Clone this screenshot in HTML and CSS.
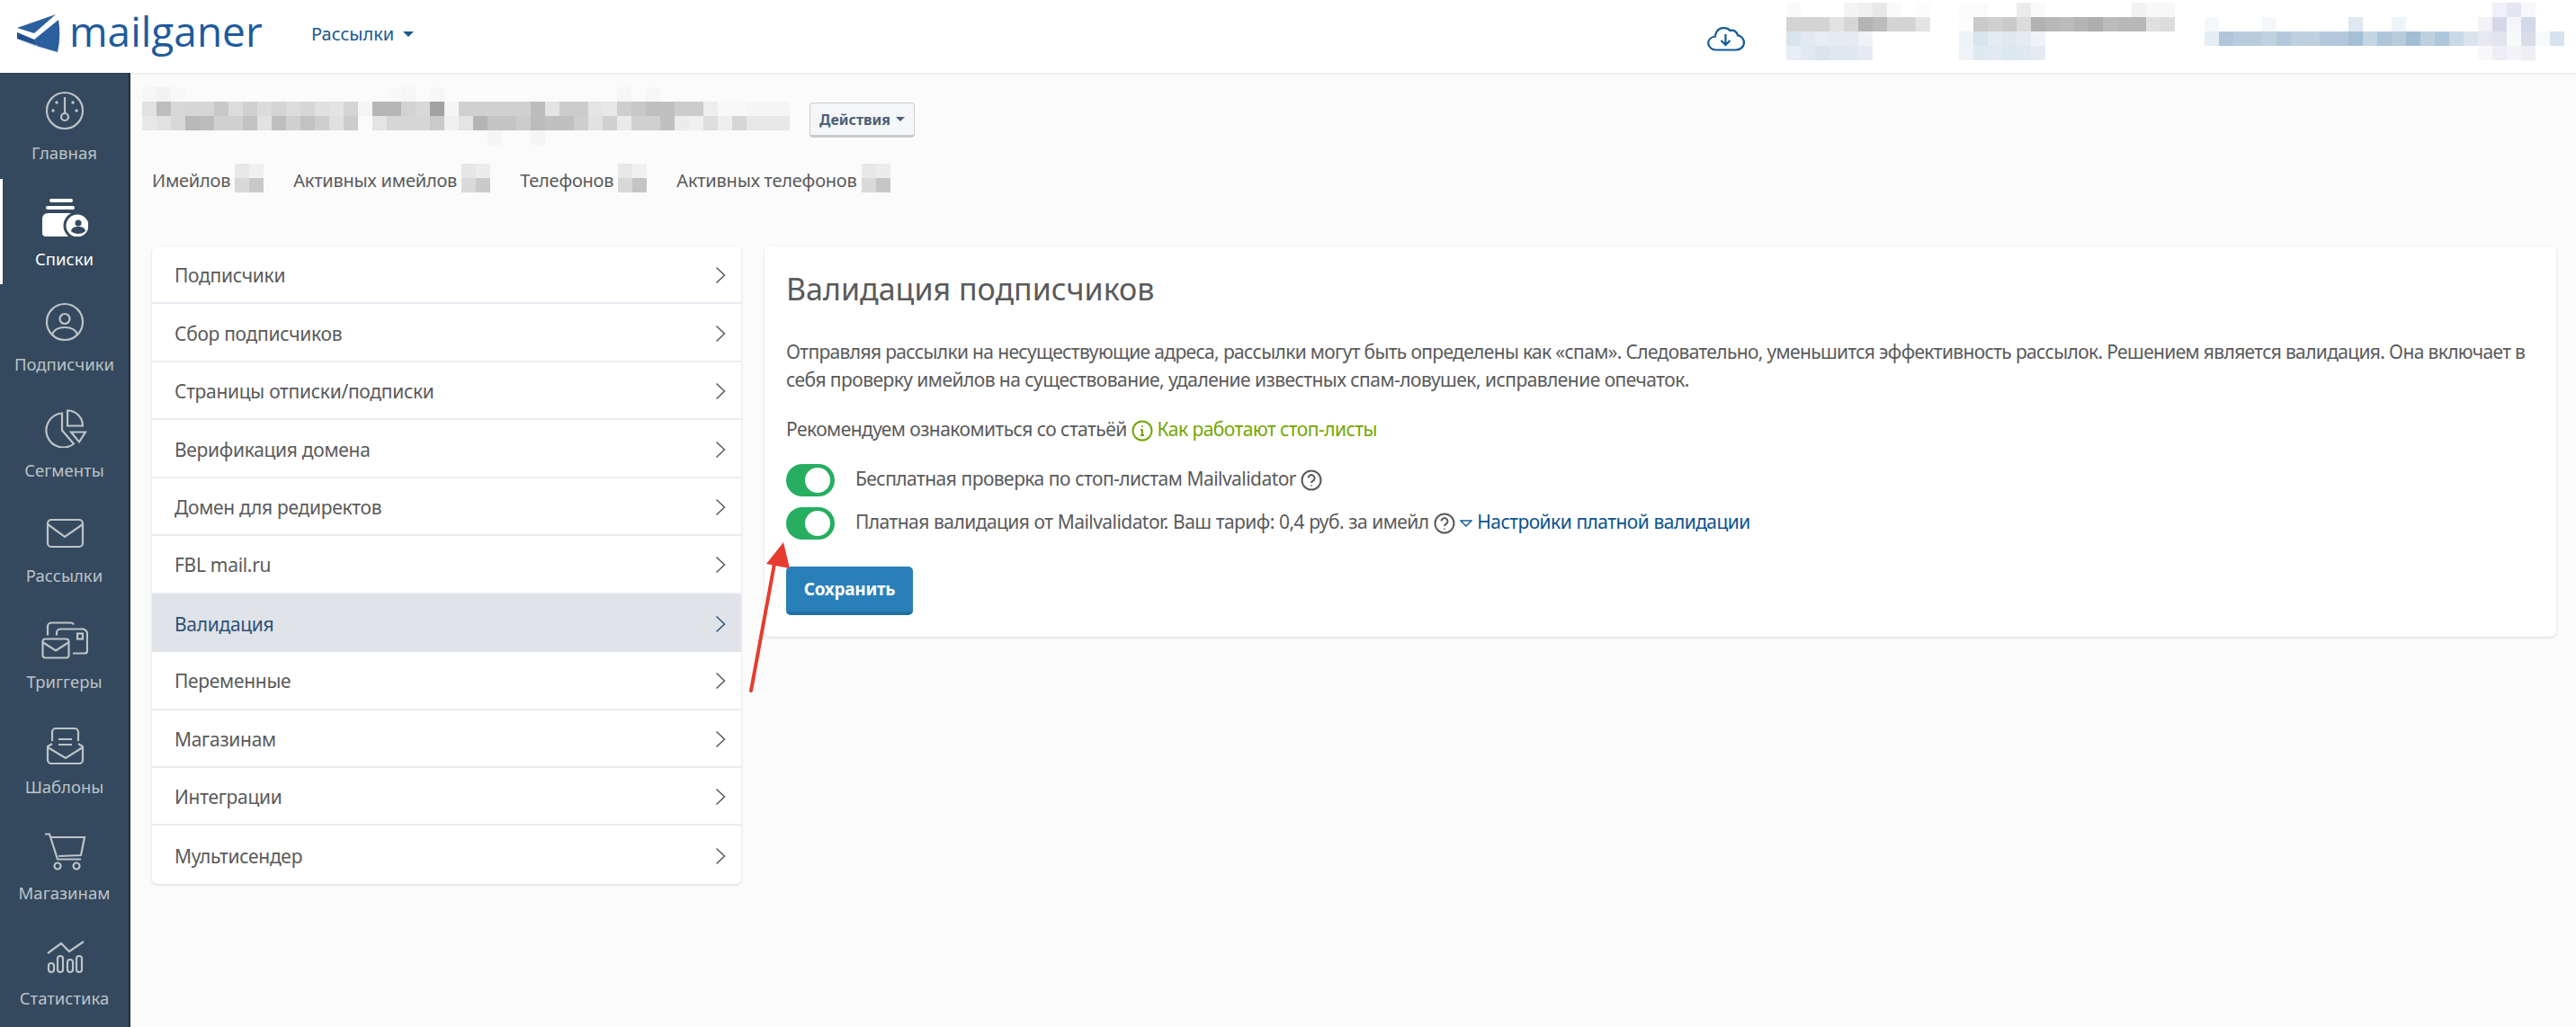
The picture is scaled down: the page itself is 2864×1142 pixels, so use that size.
FILE: index.html
```html
<!DOCTYPE html>
<html lang="ru">
<head>
<meta charset="utf-8">
<title>Mailganer</title>
<link rel="stylesheet" href="styles.css">
</head>
<body>
<header class="topbar">
  <a class="logo">
    <svg class="logo-mark" viewBox="19 16 48 43"><path fill="#2b5f9e" d="M19 31 62 16 38 37z"/><path fill="#2b5f9e" d="M38 44 65 22q3 18-1 36L42 51z"/><path fill="#1c4a85" d="M19 36 38 44 42 51 64 58 19 43z"/><path fill="#2b5f9e" d="M19 36 38 44 40 48 64 58 38 51 19 43z" opacity=".4"/></svg>
    <span class="logo-text">mailganer</span>
  </a>
  <a class="top-nav">Рассылки<i class="caret"></i></a>
  <svg class="cloud" viewBox="0 0 42 28"><path d="M10 26.500h22c5 0 9-3.500 9-8 0-4-3-7.500-7-8.300C33 6 29 3.500 25.500 5 22.500 1.500 14 .5 10.500 6.500 9.500 8.500 9 10 9 11.500 4.500 12 1.200 15 1.200 19c0 4 4 7.500 8.800 7.500z"/><path d="M20.500 9v12M15.500 16l5 5 5-5"/></svg>
  <svg class="mosaic m-top1" width="160" height="64" viewBox="0 0 160 64">
    <rect x="0" fill="#fafafa"/><rect x="64" fill="#f4f4f4"/><rect x="80" fill="#f0f0f0"/><rect x="96" fill="#e8e8e8"/><rect x="112" fill="#fafafa"/><rect x="144" fill="#fcfcfc"/>
    <rect x="0" y="16" fill="#d4d4d4"/><rect x="16" y="16" fill="#d4d4d4"/><rect x="32" y="16" fill="#d4d4d4"/><rect x="48" y="16" fill="#e2e2e2"/><rect x="64" y="16" fill="#d6d6d6"/><rect x="80" y="16" fill="#b4b4b4"/><rect x="96" y="16" fill="#bcbcbc"/><rect x="112" y="16" fill="#d4d4d4"/><rect x="128" y="16" fill="#d4d4d4"/><rect x="144" y="16" fill="#e4e4e4"/>
    <rect x="0" y="32" fill="#d8e4ed"/><rect x="16" y="32" fill="#e2e9f1"/><rect x="32" y="32" fill="#e6edf3"/><rect x="48" y="32" fill="#e4ebf2"/><rect x="64" y="32" fill="#e4ebf2"/><rect x="80" y="32" fill="#f0f4f8"/>
    <rect x="0" y="48" fill="#e8eef6"/><rect x="16" y="48" fill="#e0e9f1"/><rect x="32" y="48" fill="#d9e5ec"/><rect x="48" y="48" fill="#dfe8f0"/><rect x="64" y="48" fill="#e0e8f0"/><rect x="80" y="48" fill="#e4ebf2"/>
  </svg>
  <svg class="mosaic m-top2" width="240" height="64" viewBox="0 0 240 64">
    <rect x="0" fill="#fbfbfb"/><rect x="16" fill="#fbfbfb"/><rect x="64" fill="#ebebeb"/><rect x="80" fill="#fafafa"/><rect x="192" fill="#f2f2f2"/><rect x="208" fill="#f8f8f8"/><rect x="224" fill="#f8f8f8"/>
    <rect x="0" y="16" fill="#fcfcfc"/><rect x="16" y="16" fill="#cacaca"/><rect x="32" y="16" fill="#d0d0d0"/><rect x="48" y="16" fill="#cacaca"/><rect x="64" y="16" fill="#dcdcdc"/><rect x="80" y="16" fill="#b2b2b2"/><rect x="96" y="16" fill="#b8b8b8"/><rect x="112" y="16" fill="#bcbcbc"/><rect x="128" y="16" fill="#b4b4b4"/><rect x="144" y="16" fill="#aeaeae"/><rect x="160" y="16" fill="#bcbcbc"/><rect x="176" y="16" fill="#b8b8b8"/><rect x="192" y="16" fill="#b8b8b8"/><rect x="208" y="16" fill="#e0e0e0"/><rect x="224" y="16" fill="#dcdcdc"/>
    <rect x="0" y="32" fill="#eef3f8"/><rect x="16" y="32" fill="#d9e4ed"/><rect x="32" y="32" fill="#e4ebf2"/><rect x="48" y="32" fill="#e0e8f0"/><rect x="64" y="32" fill="#e4ebf2"/><rect x="80" y="32" fill="#f0f3f8"/>
    <rect x="0" y="48" fill="#f0f4f8"/><rect x="16" y="48" fill="#deeaf0"/><rect x="32" y="48" fill="#e2e9f2"/><rect x="48" y="48" fill="#dce8ef"/><rect x="64" y="48" fill="#dfe9ef"/><rect x="80" y="48" fill="#e4ebf2"/>
  </svg>
  <svg class="mosaic m-top3" width="400" height="64" viewBox="0 0 400 64">
    <rect x="320" fill="#f0f0f8"/><rect x="336" fill="#e4e6f2"/><rect x="352" fill="#f8f8fc"/>
    <rect x="0" y="16" fill="#f3f8fb"/><rect x="64" y="16" fill="#f4f8fb"/><rect x="160" y="16" fill="#e0e8f2"/><rect x="208" y="16" fill="#eff4f8"/><rect x="304" y="16" fill="#f2f2f8"/><rect x="320" y="16" fill="#d4d8e8"/><rect x="336" y="16" fill="#f6f6fa"/><rect x="352" y="16" fill="#d4d8e8"/>
    <rect x="0" y="32" fill="#e6eef5"/><rect x="16" y="32" fill="#b0c6da"/><rect x="32" y="32" fill="#b8ccdd"/><rect x="48" y="32" fill="#b8ccdd"/><rect x="64" y="32" fill="#bfd2df"/><rect x="80" y="32" fill="#b3c8dc"/><rect x="96" y="32" fill="#bdd0df"/><rect x="112" y="32" fill="#bfd1de"/><rect x="128" y="32" fill="#b3c8db"/><rect x="144" y="32" fill="#b3c8dc"/><rect x="160" y="32" fill="#a4c0d6"/><rect x="176" y="32" fill="#c4d6e4"/><rect x="192" y="32" fill="#afc6da"/><rect x="208" y="32" fill="#b7cbdb"/><rect x="224" y="32" fill="#a2bed3"/><rect x="240" y="32" fill="#bed1e0"/><rect x="256" y="32" fill="#afc7da"/><rect x="272" y="32" fill="#c9d9e6"/><rect x="288" y="32" fill="#d9e4ed"/><rect x="304" y="32" fill="#e8e8f2"/><rect x="320" y="32" fill="#e4e4ee"/><rect x="336" y="32" fill="#f8f9f9"/><rect x="352" y="32" fill="#d9dde9"/><rect x="368" y="32" fill="#f8f9fb"/><rect x="384" y="32" fill="#d6e3ee"/>
    <rect x="304" y="48" fill="#f8f8fb"/><rect x="320" y="48" fill="#eeeef5"/><rect x="336" y="48" fill="#f4f4f8"/><rect x="352" y="48" fill="#eeeef5"/>
  </svg>
</header>

<div class="layout">
  <nav class="sidebar">
    <a class="side-item">
      <svg class="side-icon" viewBox="45 101 52 44"><circle cx="71" cy="123" r="20"/><path d="M71 108v18"/><circle cx="71" cy="130" r="4"/><path class="dots" d="M58 123h.01M84 123h.01M62 114h.01M80 114h.01"/></svg>
      <span>Главная</span>
    </a>
    <a class="side-item active">
      <svg class="side-icon" viewBox="45 218 52 44"><rect class="solid" x="54" y="220" width="26" height="4" rx="2"/><rect class="solid" x="50" y="228" width="32" height="4" rx="2"/><path class="solid" d="M52 236h34a6 6 0 0 1 6 6v20H50a4 4 0 0 1-4-4v-16a6 6 0 0 1 6-6z"/><circle class="badge" cx="85" cy="250" r="14"/><circle class="solid" cx="86" cy="247" r="3.500"/><path class="solid" d="M78 256c1-4 4-5 8-5s7 1 8 5c-2 2-5 3-8 3s-6-1-8-3z"/></svg>
      <span>Списки</span>
    </a>
    <a class="side-item">
      <svg class="side-icon" viewBox="45 336 52 44"><circle cx="71" cy="358" r="20"/><circle cx="71" cy="354.500" r="5.500"/><path d="M57 372c2-6 8-8 14-8s12 2 14 8"/></svg>
      <span>Подписчики</span>
    </a>
    <a class="side-item">
      <svg class="side-icon" viewBox="45 453.500 52 44"><path d="M68 459a19 19 0 1 0 13 34L68 478z"/><path d="M74 456a17 17 0 0 1 17 17H74z"/><path d="M78 480h16l-7 11z"/></svg>
      <span>Сегменты</span>
    </a>
    <a class="side-item">
      <svg class="side-icon" viewBox="45 571 52 44"><rect x="52" y="578" width="39" height="30" rx="4"/><path d="M52 583l19 14 20-14"/></svg>
      <span>Рассылки</span>
    </a>
    <a class="side-item">
      <svg class="side-icon" viewBox="45 688.500 52 44"><rect x="46.500" y="710" width="29" height="21" rx="3"/><path d="M47 714l14 9 14-9"/><path d="M52 706v-10a4 4 0 0 1 4-4h22a4 4 0 0 1 3 2"/><path d="M62 706v-3a4 4 0 0 1 4-4h23a7 7 0 0 1 7 4v20a3 3 0 0 1-3 3H80"/><rect x="85" y="704" width="6" height="6"/></svg>
      <span>Триггеры</span>
    </a>
    <a class="side-item">
      <svg class="side-icon" viewBox="45 806 52 44"><path d="M57 824v-10a4 4 0 0 1 4-4h21a4 4 0 0 1 4 4v10"/><path d="M64 822h15M64 828h15"/><path d="M57 827l-5 3v15a4 4 0 0 0 4 4h31a4 4 0 0 0 4-4v-15l-5-3"/><path d="M52 831l20 12 19-12"/></svg>
      <span>Шаблоны</span>
    </a>
    <a class="side-item">
      <svg class="side-icon" viewBox="45 923.500 52 44"><path d="M49 927h5l9 28h26"/><path d="M56 930.500h37l-4 20-25 1"/><circle cx="63" cy="962.500" r="3.500"/><circle cx="84" cy="962.500" r="3.500"/></svg>
      <span>Магазинам</span>
    </a>
    <a class="side-item">
      <svg class="side-icon" viewBox="45 1041 52 44"><path d="M52 1060l15-11 9 9 16-11"/><rect x="53" y="1071" width="6" height="10" rx="3"/><rect x="63" y="1063" width="6" height="18" rx="3"/><rect x="74" y="1067" width="6" height="14" rx="3"/><rect x="84" y="1063" width="6" height="18" rx="3"/></svg>
      <span>Статистика</span>
    </a>
  </nav>

  <main class="content">
    <div class="title-row">
      <svg class="mosaic m-title" width="720" height="64" viewBox="0 0 720 64">
        <rect x="0" fill="#f6f6f6"/><rect x="16" fill="#f2f2f2"/><rect x="32" fill="#f8f8f8"/><rect x="272" fill="#f9f9f9"/><rect x="288" fill="#f6f6f6"/><rect x="320" fill="#f7f7f7"/><rect x="528" fill="#f6f6f6"/><rect x="560" fill="#f7f7f7"/>
        <rect y="16" x="0" fill="#e2e2e2"/><rect y="16" x="16" fill="#bdbdbd"/><rect y="16" x="32" fill="#d8d8d8"/><rect y="16" x="48" fill="#d6d6d6"/><rect y="16" x="64" fill="#d6d6d6"/><rect y="16" x="80" fill="#c8c8c8"/><rect y="16" x="96" fill="#dcdcdc"/><rect y="16" x="112" fill="#d0d0d0"/><rect y="16" x="128" fill="#dcdcdc"/><rect y="16" x="144" fill="#d4d4d4"/><rect y="16" x="160" fill="#dcdcdc"/><rect y="16" x="176" fill="#d6d6d6"/><rect y="16" x="192" fill="#e0e0e0"/><rect y="16" x="208" fill="#e4e4e4"/><rect y="16" x="224" fill="#d4d4d4"/><rect y="16" x="240" fill="#f5f5f5"/><rect y="16" x="256" fill="#b6b6b6"/><rect y="16" x="272" fill="#b6b6b6"/><rect y="16" x="288" fill="#d2d2d2"/><rect y="16" x="304" fill="#d8d8d8"/><rect y="16" x="320" fill="#a2a2a2"/><rect y="16" x="336" fill="#f5f5f5"/><rect y="16" x="352" fill="#d0d0d0"/><rect y="16" x="368" fill="#d0d0d0"/><rect y="16" x="384" fill="#d0d0d0"/><rect y="16" x="400" fill="#d0d0d0"/><rect y="16" x="416" fill="#d0d0d0"/><rect y="16" x="432" fill="#bcbcbc"/><rect y="16" x="448" fill="#e4e4e4"/><rect y="16" x="464" fill="#cccccc"/><rect y="16" x="480" fill="#cccccc"/><rect y="16" x="496" fill="#e4e4e4"/><rect y="16" x="512" fill="#e8e8e8"/><rect y="16" x="528" fill="#cecece"/><rect y="16" x="544" fill="#c8c8c8"/><rect y="16" x="560" fill="#c0c0c0"/><rect y="16" x="576" fill="#c0c0c0"/><rect y="16" x="592" fill="#cccccc"/><rect y="16" x="608" fill="#cccccc"/><rect y="16" x="624" fill="#eeeeee"/><rect y="16" x="640" fill="#f8f8f8"/><rect y="16" x="656" fill="#f8f8f8"/><rect y="16" x="672" fill="#f5f5f5"/><rect y="16" x="688" fill="#f5f5f5"/><rect y="16" x="704" fill="#f5f5f5"/>
        <rect y="32" x="0" fill="#e8e8e8"/><rect y="32" x="16" fill="#e2e2e2"/><rect y="32" x="32" fill="#d8d8d8"/><rect y="32" x="48" fill="#b8b8b8"/><rect y="32" x="64" fill="#bcbcbc"/><rect y="32" x="80" fill="#d0d0d0"/><rect y="32" x="96" fill="#d0d0d0"/><rect y="32" x="112" fill="#c2c2c2"/><rect y="32" x="128" fill="#e2e2e2"/><rect y="32" x="144" fill="#bfbfbf"/><rect y="32" x="160" fill="#d0d0d0"/><rect y="32" x="176" fill="#c2c2c2"/><rect y="32" x="192" fill="#cecece"/><rect y="32" x="208" fill="#e0e0e0"/><rect y="32" x="224" fill="#cccccc"/><rect y="32" x="256" fill="#e4e4e4"/><rect y="32" x="272" fill="#d6d6d6"/><rect y="32" x="288" fill="#d6d6d6"/><rect y="32" x="304" fill="#d6d6d6"/><rect y="32" x="320" fill="#cacaca"/><rect y="32" x="336" fill="#f0f0f0"/><rect y="32" x="352" fill="#e4e4e4"/><rect y="32" x="368" fill="#b4b4b4"/><rect y="32" x="384" fill="#c4c4c4"/><rect y="32" x="400" fill="#c4c4c4"/><rect y="32" x="416" fill="#cccccc"/><rect y="32" x="432" fill="#bcbcbc"/><rect y="32" x="448" fill="#c0c0c0"/><rect y="32" x="464" fill="#c0c0c0"/><rect y="32" x="480" fill="#cecece"/><rect y="32" x="496" fill="#e2e2e2"/><rect y="32" x="512" fill="#d0d0d0"/><rect y="32" x="528" fill="#eaeaea"/><rect y="32" x="544" fill="#d0d0d0"/><rect y="32" x="560" fill="#d0d0d0"/><rect y="32" x="576" fill="#c0c0c0"/><rect y="32" x="592" fill="#ececec"/><rect y="32" x="608" fill="#f0f0f0"/><rect y="32" x="624" fill="#dedede"/><rect y="32" x="640" fill="#eeeeee"/><rect y="32" x="656" fill="#d6d6d6"/><rect y="32" x="672" fill="#e8e8e8"/><rect y="32" x="688" fill="#e8e8e8"/><rect y="32" x="704" fill="#e8e8e8"/>
        <rect y="48" x="384" fill="#f5f5f5"/><rect y="48" x="432" fill="#f5f5f5"/>
      </svg>
      <button class="btn-actions">Действия<i class="caret small"></i></button>
    </div>

    <div class="stats">
      <span class="stat"><span>Имейлов</span><svg class="mosaic" width="32" height="32" viewBox="0 0 32 32"><rect fill="#e8e8e8"/><rect x="16" fill="#f0f0f0"/><rect y="16" fill="#d8d8d8"/><rect x="16" y="16" fill="#c8c8c8"/></svg></span>
      <span class="stat"><span>Активных имейлов</span><svg class="mosaic" width="32" height="32" viewBox="0 0 32 32"><rect fill="#e6e6e6"/><rect x="16" fill="#ececec"/><rect y="16" fill="#dadada"/><rect x="16" y="16" fill="#cacaca"/></svg></span>
      <span class="stat"><span>Телефонов</span><svg class="mosaic" width="32" height="32" viewBox="0 0 32 32"><rect fill="#e8e8e8"/><rect x="16" fill="#f0f0f0"/><rect y="16" fill="#d8d8d8"/><rect x="16" y="16" fill="#c4c4c4"/></svg></span>
      <span class="stat"><span>Активных телефонов</span><svg class="mosaic" width="32" height="32" viewBox="0 0 32 32"><rect fill="#e8e8e8"/><rect x="16" fill="#ececec"/><rect y="16" fill="#dadada"/><rect x="16" y="16" fill="#c6c6c6"/></svg></span>
    </div>

    <div class="columns">
      <ul class="menu">
        <li class="menu-row">Подписчики<svg class="chev" viewBox="0 0 12 20"><path d="M1.500 1.500 10.500 10l-9 8.500"/></svg></li>
        <li class="menu-row">Сбор подписчиков<svg class="chev" viewBox="0 0 12 20"><path d="M1.500 1.500 10.500 10l-9 8.500"/></svg></li>
        <li class="menu-row">Страницы отписки/подписки<svg class="chev" viewBox="0 0 12 20"><path d="M1.500 1.500 10.500 10l-9 8.500"/></svg></li>
        <li class="menu-row">Верификация домена<svg class="chev" viewBox="0 0 12 20"><path d="M1.500 1.500 10.500 10l-9 8.500"/></svg></li>
        <li class="menu-row">Домен для редиректов<svg class="chev" viewBox="0 0 12 20"><path d="M1.500 1.500 10.500 10l-9 8.500"/></svg></li>
        <li class="menu-row">FBL mail.ru<svg class="chev" viewBox="0 0 12 20"><path d="M1.500 1.500 10.500 10l-9 8.500"/></svg></li>
        <li class="menu-row current">Валидация<svg class="chev" viewBox="0 0 12 20"><path d="M1.500 1.500 10.500 10l-9 8.500"/></svg></li>
        <li class="menu-row">Переменные<svg class="chev" viewBox="0 0 12 20"><path d="M1.500 1.500 10.500 10l-9 8.500"/></svg></li>
        <li class="menu-row">Магазинам<svg class="chev" viewBox="0 0 12 20"><path d="M1.500 1.500 10.500 10l-9 8.500"/></svg></li>
        <li class="menu-row">Интеграции<svg class="chev" viewBox="0 0 12 20"><path d="M1.500 1.500 10.500 10l-9 8.500"/></svg></li>
        <li class="menu-row">Мультисендер<svg class="chev" viewBox="0 0 12 20"><path d="M1.500 1.500 10.500 10l-9 8.500"/></svg></li>
      </ul>

      <section class="panel">
        <h1 class="panel-title">Валидация подписчиков</h1>
        <p class="panel-text"><span class="tight">Отправляя рассылки на несуществующие адреса, рассылки могут быть определены как «спам». Следовательно, уменьшится эффективность рассылок. Решением является валидация. Она включает в</span><br>себя проверку имейлов на существование, удаление известных спам-ловушек, исправление опечаток.</p>
        <p class="panel-rec">Рекомендуем ознакомиться со статьёй <svg class="ring green" viewBox="0 0 24 24"><circle cx="12" cy="12" r="10.500"/><path d="M12 10.500v6.500M10 11h2M10 17h4M12 6.500v1.500"/></svg> <a class="link-green">Как работают стоп-листы</a></p>
        <div class="toggle-row">
          <span class="toggle"></span>
          <span class="toggle-label">Бесплатная проверка по стоп-листам Mailvalidator <svg class="ring" viewBox="0 0 24 24"><circle cx="12" cy="12" r="10.500"/><path d="M8.500 9.500a3.500 3.500 0 1 1 5.500 3c-1.300.9-2 1.300-2 2.500M12 17.500v1"/></svg></span>
        </div>
        <div class="toggle-row">
          <span class="toggle"></span>
          <span class="toggle-label">Платная валидация от Mailvalidator. Ваш тариф: 0,4 руб. за имейл <svg class="ring" viewBox="0 0 24 24"><circle cx="12" cy="12" r="10.500"/><path d="M8.500 9.500a3.500 3.500 0 1 1 5.500 3c-1.300.9-2 1.300-2 2.500M12 17.500v1"/></svg> <svg class="tri" viewBox="0 0 14 8"><path d="M1 1h12L7 7z"/></svg> <a class="link-blue">Настройки платной валидации</a></span>
        </div>
        <button class="btn-save">Сохранить</button>
        <svg class="arrow" viewBox="0 0 50 170"><path class="shaft" d="M3 167 29 26"/><path class="head" d="M39 2 46 31 20 26z"/></svg>
      </section>
    </div>
  </main>
</div>
</body>
</html>
```
FILE: styles.css
```css
* { box-sizing: border-box; }
html, body { margin: 0; height: 1142px; overflow: hidden; }
body { background: #fbfbfb; color: #5a5a5a; font-family: "Noto Sans", "Open Sans", sans-serif; font-size: 21px; }
ul { list-style: none; margin: 0; padding: 0; }
p, h1 { margin: 0; }

.mosaic { display: block; flex: none; shape-rendering: crispEdges; }
.mosaic rect { width: 16px; height: 16px; }

.topbar { height: 81px; background: #fff; display: flex; align-items: flex-start; box-shadow: 0 1px 3px rgba(0,0,0,.1); position: relative; z-index: 2; }
.logo { display: flex; align-items: flex-start; margin-left: 19px; width: 327px; flex: none; }
.logo-mark { width: 48px; height: 43px; margin-top: 16px; flex: none; }
.logo-text { font-family: "Open Sans", sans-serif; font-size: 46px; line-height: 60px; color: #1f5b9b; margin-left: 10px; margin-top: 4px; }
.top-nav { color: #1c5a92; font-size: 20px; line-height: 28px; margin-top: 24px; display: flex; align-items: center; }
.caret { display: inline-block; border: 6px solid transparent; border-top-color: #1c5a92; border-bottom: 0; margin-left: 10px; }
.caret.small { border-width: 5px; border-bottom: 0; border-top-color: #4d5f75; margin-left: 6px; }
.cloud { width: 42px; height: 28px; margin: 29px 46px 0 auto; fill: none; stroke: #105a96; stroke-width: 2.2; flex: none; }
.m-top1 { margin-top: 3px; margin-right: 32px; }
.m-top2 { margin-top: 3px; margin-right: 33px; }
.m-top3 { margin-top: 3px; margin-right: 13px; }

.layout { display: flex; height: 1061px; }
.sidebar { width: 145px; flex: none; background: #34495e; border-right: 2px solid #1f3145; display: block; overflow: hidden; }
.side-item { height: 117.500px; display: flex; flex-direction: column; align-items: center; padding-top: 20px; color: #bdc3c7; font-size: 18.500px; line-height: 24px; position: relative; }
.side-item span { margin-top: 13px; white-space: nowrap; }
.side-item.active { color: #fff; box-shadow: inset 3px 0 0 #fff; }
.side-icon { width: 52px; height: 44px; fill: none; stroke: #bdc3c7; stroke-width: 2.2; flex: none; }
.side-icon .dots { stroke-linecap: round; stroke-width: 3.500; }
.side-icon .solid { fill: #fff; stroke: none; }
.side-icon .badge { fill: #fff; stroke: #34495e; stroke-width: 3; }
.side-item.active .side-icon .solid:nth-last-child(-n+2) { fill: #34495e; }

.content { flex: 1; min-width: 0; padding: 16px 22px 0 24px; }
.title-row { display: flex; align-items: flex-start; height: 64px; }
.m-title { margin-left: -11px; }
.btn-actions { margin: 17px 0 0 22px; width: 117px; height: 39px; background: #f5f6f7; border: 1px solid #c8ccd0; border-bottom-width: 3px; border-radius: 4px; color: #4d5f75; font: 700 16px "Noto Sans", sans-serif; padding: 0; display: flex; align-items: center; justify-content: center; }

.stats { display: flex; margin-top: 21px; height: 32px; margin-bottom: 60px; font-size: 20px; letter-spacing: -.22px; }
.stat { display: flex; align-items: center; margin-right: 33px; gap: 5px; white-space: nowrap; }
.stat > span { padding-top: 5px; }

.columns { display: flex; align-items: flex-start; gap: 26px; }
.menu { width: 655px; flex: none; background: #fff; border-radius: 6px; box-shadow: 0 1px 3px rgba(0,0,0,.14); overflow: hidden; letter-spacing: -.3px; }
.menu-row { height: 64.450px; padding: 2px 17px 0 25px; display: flex; align-items: center; justify-content: space-between; border-bottom: 2px solid #e9edf1; line-height: 34px; }
.menu-row:last-child { border-bottom: 0; }
.menu-row.current { background: #e0e3e7; color: #2c5278; border-bottom: 0; }
.chev { width: 12px; height: 20px; fill: none; stroke: #5a5a5a; stroke-width: 1.500; }
.current .chev { stroke: #2c5278; }

.panel { flex: 1; min-width: 0; position: relative; background: #fff; border-radius: 6px; box-shadow: 0 1px 3px rgba(0,0,0,.14); padding: 22px 24px 24px; height: 434px; letter-spacing: -.55px; }
.panel-title { font-size: 34px; line-height: 50px; font-weight: 400; color: #5a5a5a; margin-bottom: 30px; letter-spacing: 0; }
.panel-text { line-height: 31px; white-space: nowrap; }
.tight { letter-spacing: -.66px; }
.panel-rec { line-height: 31px; margin-top: 24px; margin-bottom: 23px; white-space: nowrap; }
.ring { width: 24px; height: 24px; vertical-align: -6px; fill: none; stroke: #5a5a5a; stroke-width: 2; }
.ring.green { stroke: #74a600; }
.tri { width: 14px; height: 8px; vertical-align: 2px; fill: none; stroke: #155d96; stroke-width: 1.500; }
.link-green { color: #74a600; }
.link-blue { color: #0b5290; }
.toggle-row { display: flex; align-items: center; height: 36px; margin-bottom: 12px; }
.toggle { width: 54px; height: 36px; border-radius: 18px; background: #27ae60; position: relative; flex: none; margin-right: 23px; }
.toggle::after { content: ""; position: absolute; right: 5px; top: 4px; width: 28px; height: 28px; border-radius: 50%; background: #fff; }
.toggle-label { white-space: nowrap; padding-bottom: 4px; word-spacing: .3px; }
.btn-save { display: block; margin-top: 30px; width: 141px; height: 54px; background: #2980b9; border: 0; border-bottom: 4px solid #236fa1; border-radius: 5px; color: #fff; font: 700 19px "Noto Sans", sans-serif; letter-spacing: -.3px; padding: 0; }
.arrow { position: absolute; left: -18px; top: 327px; width: 50px; height: 170px; overflow: visible; }
.arrow .shaft { stroke: #e63c2f; stroke-width: 4; stroke-linecap: round; fill: none; }
.arrow .head { fill: #e63c2f; }
```
